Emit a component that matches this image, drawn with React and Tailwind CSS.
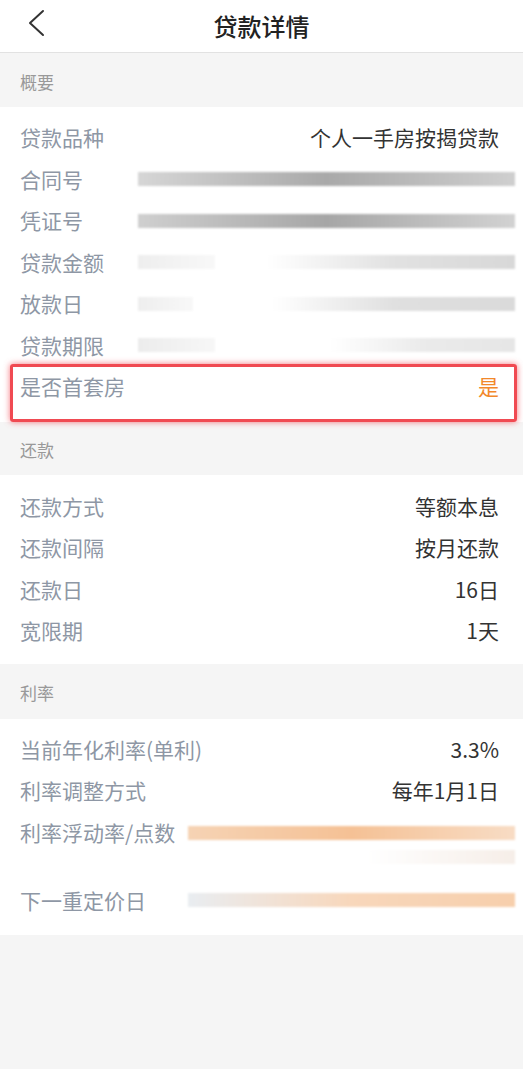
const FONT = { fontFamily: '"Noto Sans CJK SC", "Noto Sans", sans-serif' };

// a smeared (redacted) value strip
function Smear({ className }) {
  return <div className={`h-[14px] blur-[1.2px] ${className}`} />;
}

function Row({ label, value, orange, children, labelWidth = "w-[118px]", tall }) {
  return (
    <div className={`flex px-5 ${tall ? "h-[68px] items-start" : "h-[41.5px] items-center"}`}>
      {children ? (
        <>
          <span className={`shrink-0 text-[21px] leading-[41.5px] text-[#8e97a5] ${labelWidth}`}>{label}</span>
          <div className="-mr-[12px] flex-1">{children}</div>
        </>
      ) : (
        <>
          <span className="text-[21px] text-[#8e97a5]">{label}</span>
          <span className={`ml-auto pr-1 text-[21px] ${orange ? "text-[#f2882b]" : "text-[#333333]"}`}>{value}</span>
        </>
      )}
    </div>
  );
}

function SectionTitle({ children, className = "h-[54px]" }) {
  return (
    <div className={`flex items-center bg-[#f5f5f5] px-5 pt-1 text-[17px] text-[#999999] ${className}`}>
      {children}
    </div>
  );
}

export default function App() {
  return (
    <div className="min-h-[1069px] w-[523px] bg-[#f5f5f5]" style={FONT}>
      <header className="relative flex h-[53px] items-center justify-center border-b border-[#e2e2e2] bg-white">
        <button type="button" className="absolute left-[26px] top-[8px]">
          <svg width="22" height="30" viewBox="0 0 22 30" fill="none">
            <polyline points="17,3 4,15 17,27" stroke="#333333" strokeWidth="2" strokeLinecap="round" strokeLinejoin="round" />
          </svg>
        </button>
        <h1 className="text-[24px] font-medium text-[#222222]">贷款详情</h1>
      </header>

      <SectionTitle>概要</SectionTitle>
      <section className="bg-white pb-[14px] pt-[10px]">
        <Row label="贷款品种" value="个人一手房按揭贷款" />
        <Row label="合同号">
          <Smear className="bg-linear-to-r from-[#d6d6d6] via-[#a9a9a9] to-[#cfcfcf]" />
        </Row>
        <Row label="凭证号">
          <Smear className="bg-linear-to-r from-[#cfcfcf] via-[#a6a6a6] to-[#d2d2d2]" />
        </Row>
        <Row label="贷款金额">
          <div className="flex gap-[52px]">
            <Smear className="w-[77px] bg-linear-to-r from-[#eeeeee] to-[#f8f8f8]" />
            <Smear className="flex-1 bg-linear-to-r from-white via-[#e2e2e2] to-[#d8d8d8]" />
          </div>
        </Row>
        <Row label="放款日">
          <div className="flex gap-[79px]">
            <Smear className="w-[55px] bg-linear-to-r from-[#eeeeee] to-[#f8f8f8]" />
            <Smear className="flex-1 bg-linear-to-r from-white via-[#e0e0e0] to-[#dadada]" />
          </div>
        </Row>
        <Row label="贷款期限">
          <div className="flex gap-[115px]">
            <Smear className="w-[77px] bg-linear-to-r from-[#ececec] to-[#f7f7f7]" />
            <Smear className="flex-1 bg-linear-to-r from-white via-[#ebebeb] to-[#e6e6e6]" />
          </div>
        </Row>
        <div className="relative">
          <Row label="是否首套房" value="是" orange />
          <div className="pointer-events-none absolute bottom-[-14px] left-[10px] right-[6px] top-[-2px] rounded-[3px] border-[3px] border-[#f04a52] shadow-[0_0_6px_rgba(240,60,70,0.7)]" />
        </div>
      </section>

      <SectionTitle className="h-[53px]">还款</SectionTitle>
      <section className="bg-white pb-[12px] pt-[11px]">
        <Row label="还款方式" value="等额本息" />
        <Row label="还款间隔" value="按月还款" />
        <Row label="还款日" value="16日" />
        <Row label="宽限期" value="1天" />
      </section>

      <SectionTitle className="h-[55px]">利率</SectionTitle>
      <section className="bg-white pb-[14px] pt-[10px]">
        <Row label="当前年化利率(单利)" value="3.3%" />
        <Row label="利率调整方式" value="每年1月1日" />
        <Row label="利率浮动率/点数" labelWidth="w-[168px]" tall>
          <div className="flex flex-col gap-[10px] pt-[14px]">
            <Smear className="bg-linear-to-r from-[#f6d3b4] via-[#f5c195] to-[#f8dcc4]" />
            <Smear className="ml-[180px] h-[10px] bg-linear-to-r from-white to-[#f6eee8]" />
          </div>
        </Row>
        <Row label="下一重定价日" labelWidth="w-[168px]">
          <Smear className="bg-linear-to-r from-[#e9edf1] via-[#f8d7bb] to-[#f7cfac]" />
        </Row>
      </section>
    </div>
  );
}
